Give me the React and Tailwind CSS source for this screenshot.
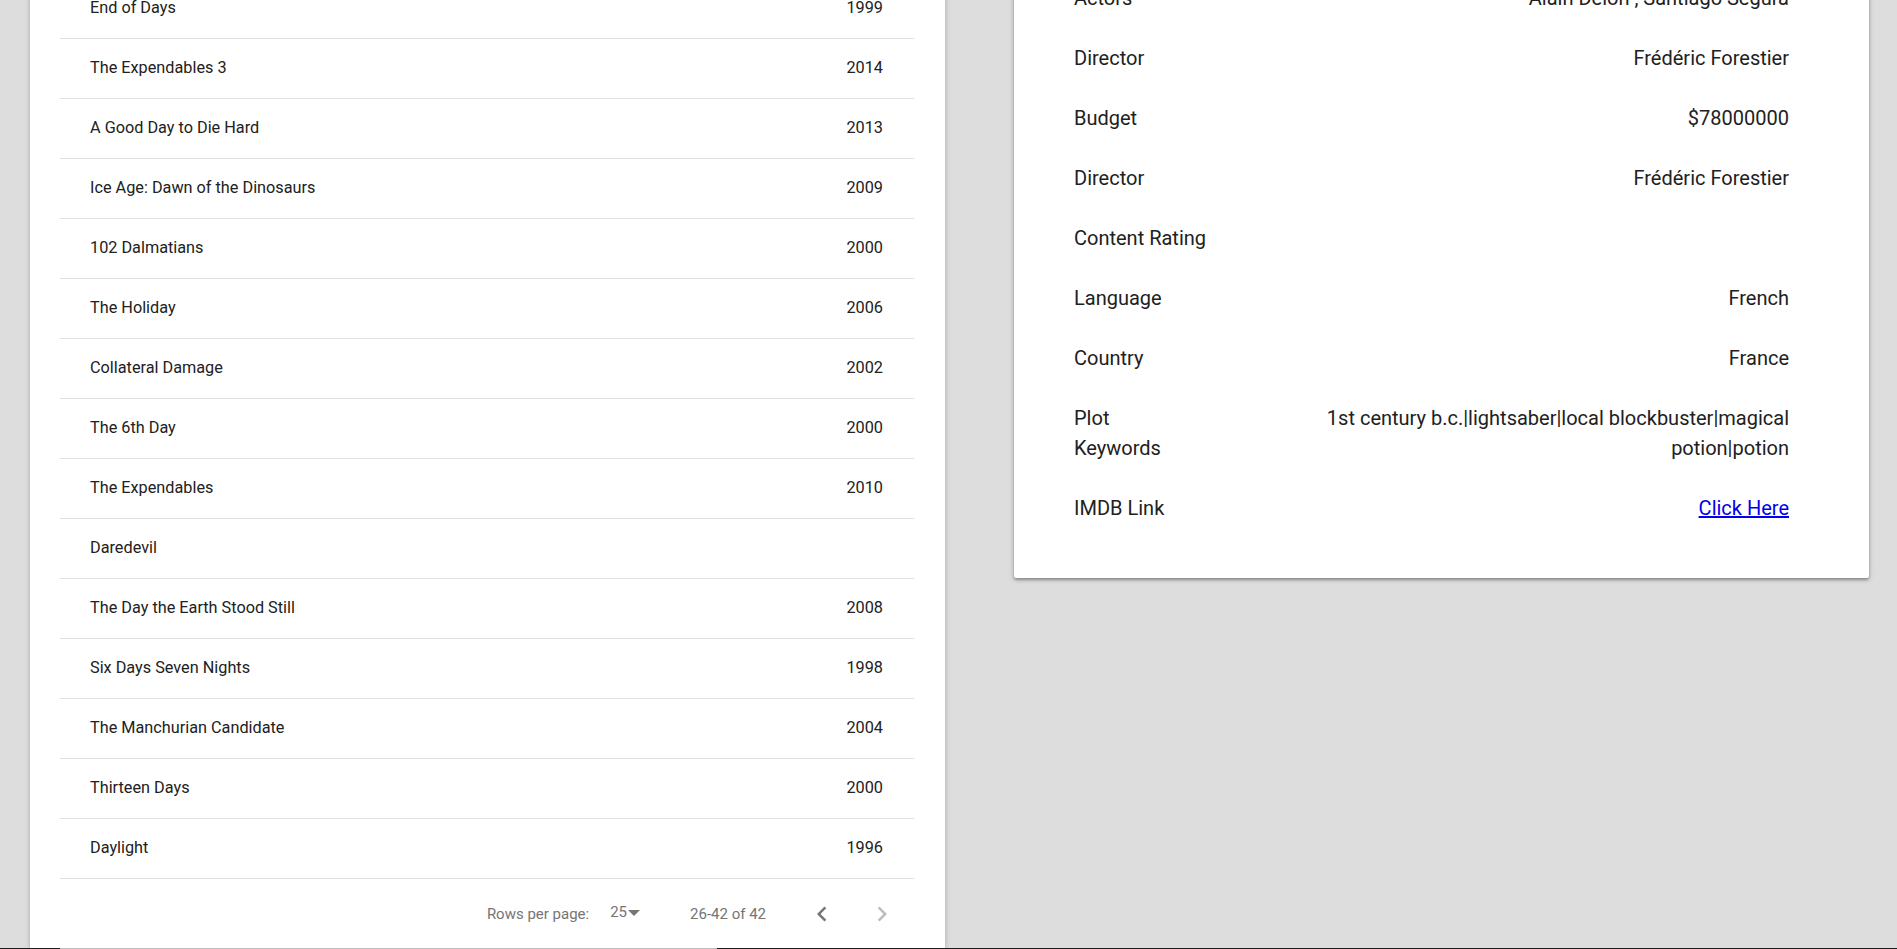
import React from "react";

const movies = [
  ["End of Days", "1999"],
  ["The Expendables 3", "2014"],
  ["A Good Day to Die Hard", "2013"],
  ["Ice Age: Dawn of the Dinosaurs", "2009"],
  ["102 Dalmatians", "2000"],
  ["The Holiday", "2006"],
  ["Collateral Damage", "2002"],
  ["The 6th Day", "2000"],
  ["The Expendables", "2010"],
  ["Daredevil", ""],
  ["The Day the Earth Stood Still", "2008"],
  ["Six Days Seven Nights", "1998"],
  ["The Manchurian Candidate", "2004"],
  ["Thirteen Days", "2000"],
  ["Daylight", "1996"],
];

const details = [
  ["Actors", "Alain Delon , Santiago Segura"],
  ["Director", "Frédéric Forestier"],
  ["Budget", "$78000000"],
  ["Director", "Frédéric Forestier"],
  ["Content Rating", ""],
  ["Language", "French"],
  ["Country", "France"],
];

function Chevron({ dir, color }) {
  return (
    <svg width="30" height="30" viewBox="0 0 24 24" fill={color}>
      {dir === "left" ? (
        <path d="M15.41 7.41L14 6l-6 6 6 6 1.41-1.41L10.83 12z" />
      ) : (
        <path d="M10 6L8.59 7.41 13.17 12l-4.58 4.59L10 18l6-6z" />
      )}
    </svg>
  );
}

export default function App() {
  return (
    <div
      className="h-[949px] w-full flex flex-col bg-[#dddddd] overflow-hidden text-[#212121]"
      style={{ fontFamily: "Roboto, 'Liberation Sans', sans-serif" }}
    >
      <div className="flex-1 min-h-0 flex items-start overflow-hidden pl-[30px]">
        {/* Left card */}
        <div className="w-[915px] shrink-0 -mt-[21px] bg-white shadow-[0_1px_6px_rgba(0,0,0,0.12),0_1px_4px_rgba(0,0,0,0.12)]">
          <div className="pl-[30px] pr-[31px]">
            {movies.map(([title, year], i) => (
              <div
                key={i}
                className="h-[60px] flex items-center justify-between border-b border-[#e0e0e0] pl-[30px] pr-[31px] text-[16.25px]"
              >
                <span>{title}</span>
                <span>{year}</span>
              </div>
            ))}
            <div className="h-[70px] flex items-center justify-end pr-[2px] text-[15px] text-[#757575]">
              <span>Rows per page:</span>
              <span className="ml-[21px] mb-[4px] flex items-center">
                <span>25</span>
                <svg width="12" height="6" viewBox="0 0 10 5" fill="#757575" className="ml-[1px] mt-[1px]">
                  <path d="M0 0l5 5 5-5z" />
                </svg>
              </span>
              <span className="ml-[50px]">26-42 of 42</span>
              <div className="ml-[26px] w-[60px] h-[60px] flex items-center justify-center">
                <Chevron dir="left" color="#757575" />
              </div>
              <div className="w-[60px] h-[60px] flex items-center justify-center">
                <Chevron dir="right" color="#bdbdbd" />
              </div>
            </div>
          </div>
        </div>

        {/* Right card */}
        <div className="ml-[69px] w-[855px] shrink-0 -mt-[32px] bg-white rounded-[2px] shadow-[0_1px_6px_rgba(0,0,0,0.16),0_2px_3px_rgba(0,0,0,0.3)] pl-[60px] pr-[80px] pb-[40px] text-[20px] leading-[30px]">
          {details.map(([label, value], i) => (
            <div key={i} className="flex justify-between py-[15px]">
              <span>{label}</span>
              <span className="text-right">{value}</span>
            </div>
          ))}
          <div className="flex justify-between py-[15px]">
            <span>
              Plot
              <br />
              Keywords
            </span>
            <span className="text-right">
              1st century b.c.|lightsaber|local blockbuster|magical
              <br />
              potion|potion
            </span>
          </div>
          <div className="flex justify-between py-[15px]">
            <span>IMDB Link</span>
            <a href="#" className="text-[#0000ee] underline">
              Click Here
            </a>
          </div>
        </div>
      </div>
      <div className="h-[1px] flex shrink-0">
        <div className="w-[60px] bg-[#1c1c1c]" />
        <div className="w-[657px] bg-[#bdbdbd]" />
        <div className="flex-1 bg-[#1c1c1c]" />
      </div>
    </div>
  );
}
